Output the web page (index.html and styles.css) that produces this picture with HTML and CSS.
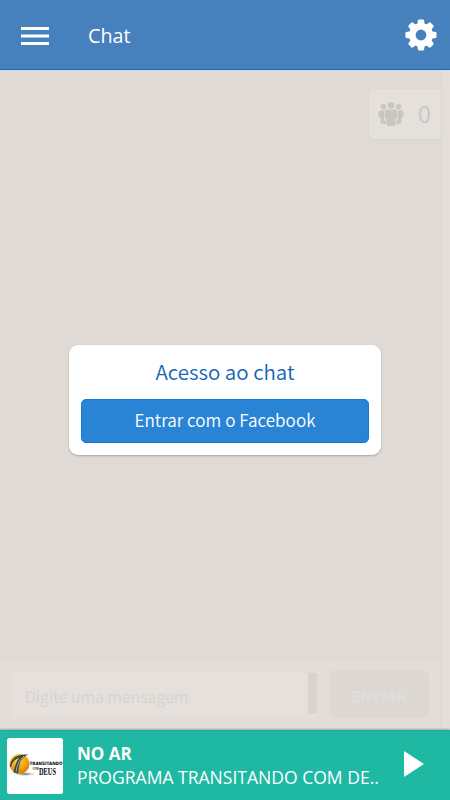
FILE: index.html
```html
<!DOCTYPE html>
<html lang="pt-BR">
<head>
<meta charset="utf-8">
<title>Chat</title>
<link rel="stylesheet" href="styles.css">
</head>
<body>
<div class="app">
  <header class="topbar">
    <svg class="menu" width="28" height="20" viewBox="0 0 28 20"><path fill="#fff" d="M0 1h28v3H0zM0 8.500h28v3H0zM0 16h28v3H0z"/></svg>
    <h1 class="title">Chat</h1>
    <svg class="gear" width="38" height="38" viewBox="0 0 24 24"><g fill="#fff" transform="translate(12 12)"><path fill-rule="evenodd" d="M0-7.500A7.500 7.500 0 1 1 0 7.500A7.500 7.500 0 1 1 0-7.500M0-3.400A3.400 3.400 0 1 0 0 3.400A3.400 3.400 0 1 0 0-3.400"/><path id="tooth" d="M-2.400-6.500L-1.900-9.300Q-1.800-9.800-1.300-9.800H1.300Q1.800-9.800 1.900-9.300L2.400-6.500Z"/><use href="#tooth" transform="rotate(45)"/><use href="#tooth" transform="rotate(90)"/><use href="#tooth" transform="rotate(135)"/><use href="#tooth" transform="rotate(180)"/><use href="#tooth" transform="rotate(225)"/><use href="#tooth" transform="rotate(270)"/><use href="#tooth" transform="rotate(315)"/></g></svg>
  </header>
  <main class="chat">
    <div class="room">
      <div class="users">
        <svg width="26" height="25" viewBox="0 0 26 25" fill="#cac5c1"><circle cx="13" cy="3.300" r="3.300"/><circle cx="5.400" cy="4.800" r="2.800"/><circle cx="20.600" cy="4.800" r="2.800"/><path d="M9 7.600h8q2 0 2 2v6q0 1.500-1.500 1.500v5q0 2-2 2h-5q-2 0-2-2v-5q-1.500 0-1.500-1.500v-6q0-2 2-2zM2.500 8.400h3.800v10.300h1.500v3H4.500q-2 0-2-2v-4Q.5 15.700.5 14.200v-4q0-1.800 2-1.800zM19.700 8.400h3.800q2 0 2 1.800v4q0 1.500-2 1.500v4q0 2-2 2h-3.300v-3h1.500z"/></svg>
        <span class="count">0</span>
      </div>
      <div class="composer">
        <div class="field"><span>Digite uma mensagem</span><i class="thumb"></i></div>
        <div class="send">ENVIAR</div>
      </div>
    </div>
    <div class="gutter"></div>
    <section class="dialog">
      <h2>Acesso ao chat</h2>
      <button class="login">Entrar com o Facebook</button>
    </section>
  </main>
  <footer class="player">
    <svg class="cover" width="56" height="56" viewBox="0 0 56 56">
      <defs><radialGradient id="sun" cx=".4" cy=".3" r=".7"><stop offset="0" stop-color="#ffd23c"/><stop offset=".6" stop-color="#f6a313"/><stop offset="1" stop-color="#d98208"/></radialGradient>
      <radialGradient id="shade"><stop offset="0" stop-color="#555"/><stop offset="1" stop-color="#fff" stop-opacity="0"/></radialGradient></defs>
      <rect width="56" height="56" rx="2.500" fill="#fff"/>
      <ellipse cx="18" cy="36" rx="13" ry="2.500" fill="url(#shade)"/>
      <circle cx="12.500" cy="26" r="10" fill="url(#sun)"/>
      <path fill="#34474a" d="M2.800 29Q3.500 20.500 11 17.800Q16 16 21.500 16.500Q16 18.500 13.500 23.500Q11.500 28 11 35.500L6.500 34.500Q8 25 12.500 19.500Q5.500 22 4 29Z"/>
      <path d="M9 34Q10 24 17 18" fill="none" stroke="#b9c6bd" stroke-width=".8"/>
      <text class="logo-sans" x="22.500" y="27" textLength="33" lengthAdjust="spacingAndGlyphs">TRANSITANDO</text>
      <text class="logo-small" x="25.500" y="31.500" textLength="6" lengthAdjust="spacingAndGlyphs">COM</text>
      <text class="logo-serif" x="32" y="36.500" textLength="17" lengthAdjust="spacingAndGlyphs">DEUS</text>
    </svg>
    <div class="track"><strong>NO AR</strong><span>PROGRAMA TRANSITANDO COM DE..</span></div>
    <svg class="play" width="21" height="26" viewBox="0 0 21 26"><path fill="#fff" d="M0 0L20 13L0 26Z"/></svg>
  </footer>
</div>
</body>
</html>
```

FILE: styles.css
```css
* { box-sizing: border-box; }
body { margin: 0; font-family: "Open Sans", "Noto Sans", sans-serif; }
.app { width: 450px; height: 800px; display: flex; flex-direction: column; overflow: hidden; }
.topbar { height: 70px; flex: none; display: flex; align-items: center; padding: 0 10px 0 21px; background: #4680bd; border-bottom: 1px solid #1b6cb0; color: #fff; }
.menu { margin-top: 2px; }
.title { margin: 2px 0 0 39px; font-size: 19.800px; font-weight: 400; line-height: 28px; }
.gear { margin: 1px 0 0 auto; }
.chat { position: relative; height: 660px; flex: none; display: flex; background: #dfdad6; font-family: "Noto Sans CJK SC", "Noto Sans", sans-serif; }
.room { width: 441px; display: flex; flex-direction: column; justify-content: space-between; align-items: flex-end; padding-top: 19px; }
.gutter { flex: 1; background: #e3deda; border-left: 1px solid #dcd7d3; }
.users { width: 72px; height: 50px; display: flex; align-items: center; justify-content: space-between; padding: 0 10px 0 9px; border-radius: 6px 0 0 6px; background: #e5e0dc; box-shadow: 0 1px 1px #d9d4d0; }
.count { margin-top: -2px; color: #cac5c1; font-size: 23.500px; line-height: 30px; font-weight: 350; }
.composer { width: 100%; height: 69px; display: flex; padding: 9px 12px 0; background: #e2ddd9; }
.field { width: 305px; height: 45px; margin-top: 3px; display: flex; justify-content: space-between; border-radius: 5px; background: #e5e0dc; padding-left: 13px; color: #d7d2ce; font-size: 15.850px; line-height: 48px; font-weight: 350; }
.thumb { width: 9px; height: 41px; background: #d8d3cf; }
.send { width: 100px; height: 48px; margin-left: 12px; border-radius: 5px; background: #ddd8d4; color: #e2ddd9; font-size: 15px; font-weight: 700; letter-spacing: .2px; line-height: 52px; text-align: center; }
.dialog { position: absolute; left: 69px; top: 275px; width: 312px; height: 110px; padding: 11px 12px 12px; border-radius: 9px; background: #fff; box-shadow: 0 1px 2px #aaa5a1; }
.dialog h2 { margin: 0 0 13px; color: #1464b8; font-size: 20.500px; line-height: 30px; font-weight: 350; text-align: center; }
.login { display: block; width: 288px; height: 44px; padding: 0 0 2px; border: 1px solid #1879d2; border-radius: 5px; background: #2984d5; color: #fff; font: 350 17.100px/40px "Noto Sans CJK SC", "Noto Sans", sans-serif; text-align: center; }
.player { position: relative; height: 70px; flex: none; display: flex; align-items: center; padding: 0 25px 0 7px; background: #1eb8a3; border-top: 1px solid #12b39b; box-shadow: 0 -1px 2px #aaa49f; color: #fff; }
.cover { flex: none; }
.track { margin-left: 14px; display: flex; flex-direction: column; font-size: 17.550px; line-height: 24px; white-space: nowrap; }
.track span { margin-top: -1px; }
.track strong { font-size: 17px; }
.play { margin: -3px 0 0 auto; }
.logo-sans { font: 700 4.600px "DejaVu Sans", sans-serif; }
.logo-small { font: 700 4px "Liberation Serif", serif; }
.logo-serif { font: 700 10px "Liberation Serif", serif; }
```
